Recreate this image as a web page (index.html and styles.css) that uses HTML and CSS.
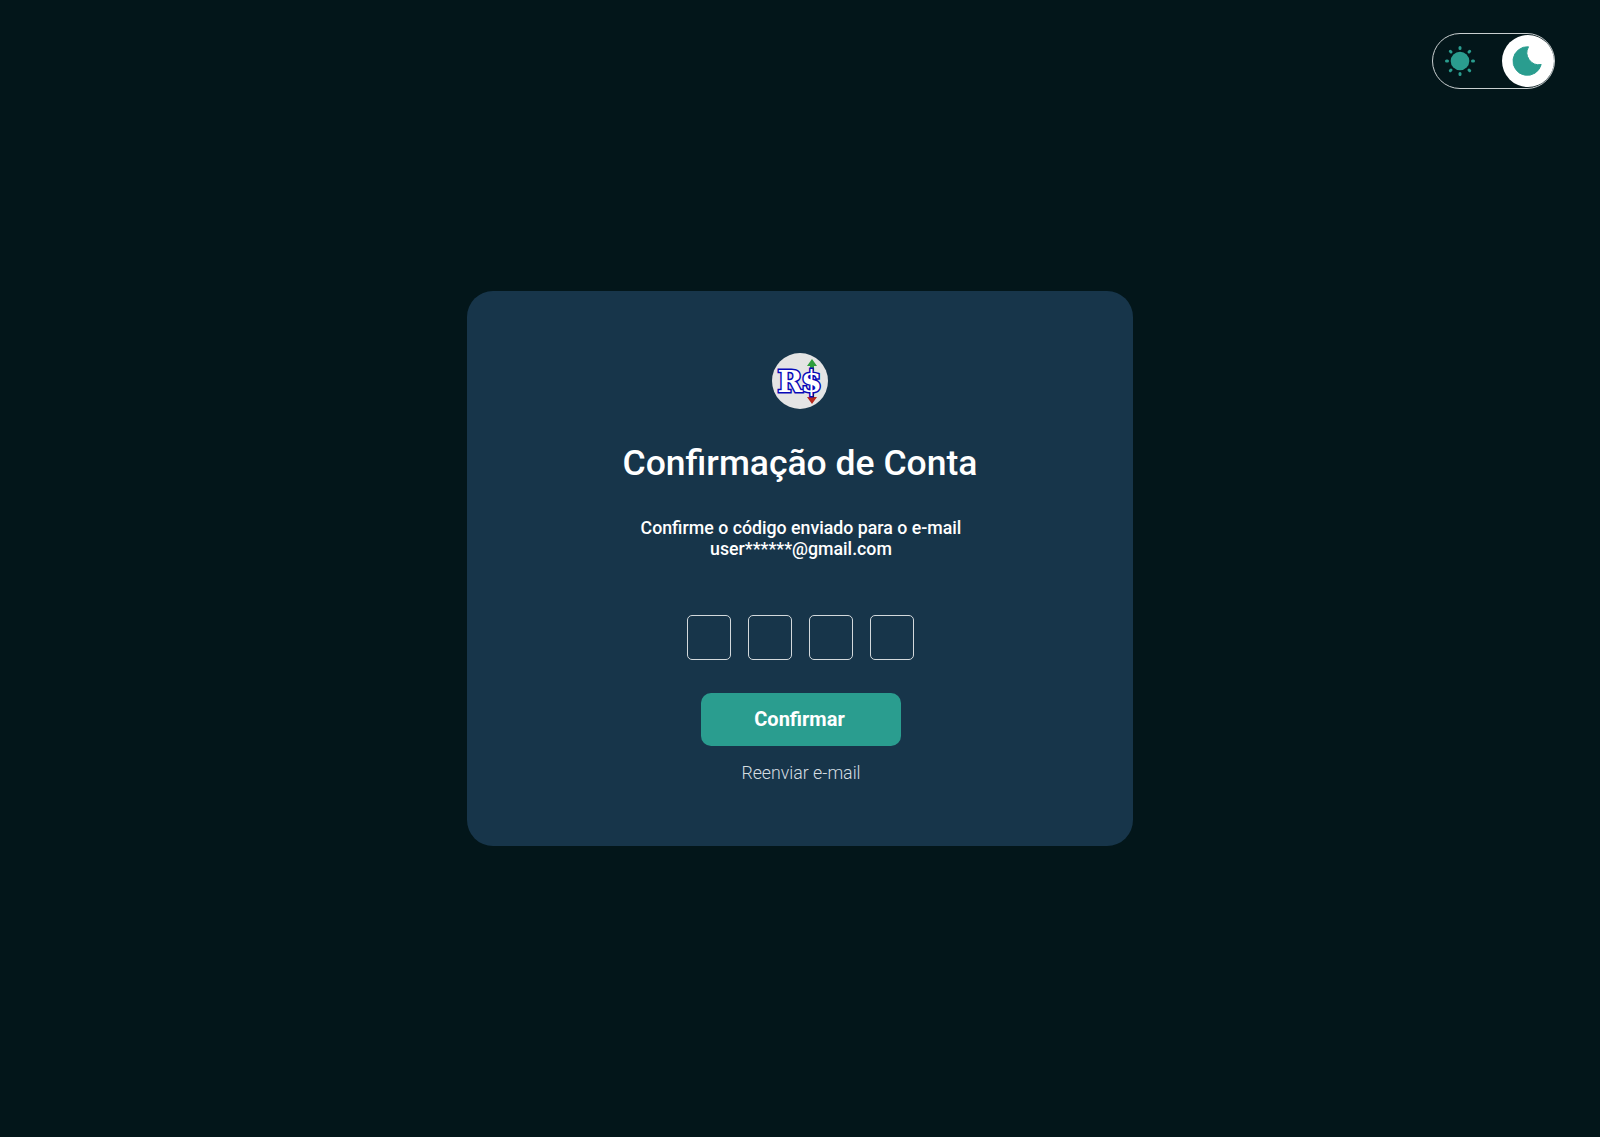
FILE: index.html
```html
<!DOCTYPE html>
<html lang="pt-BR">
<head>
<meta charset="utf-8">
<title>Confirmação de Conta</title>
<link rel="stylesheet" href="styles.css">
</head>
<body>
<div class="theme-toggle">
  <svg class="sun" viewBox="0 0 32 32" width="32" height="32">
    <circle cx="16" cy="16" r="9.300" fill="#2a9d8f"/>
    <path stroke="#2a9d8f" stroke-width="3" stroke-linecap="round" d="M16 2.500v1M16 28.500v1M2.500 16h1M28.500 16h1M6.300 6.300l.7.700M25 25l.7.700M6.300 25.700l.7-.7M25 7l.7-.7"/>
  </svg>
  <div class="knob">
    <svg viewBox="0 0 30 30" width="30" height="30">
      <path fill="#2a9d8f" stroke="#2a9d8f" stroke-width="1" stroke-linejoin="round" d="M16.500 .8A14.300 14.300 0 1 0 29.200 18.500A12 12 0 0 1 16.500 .8z"/>
    </svg>
  </div>
</div>
<main class="card">
  <svg class="logo" viewBox="0 0 56 56" width="56" height="56">
    <circle cx="28" cy="28" r="28" fill="#e4e4e4"/>
    <path fill="#2e9e3e" d="M40 6l5 7h-3v5h-4v-5h-3z"/>
    <path fill="#b8281c" d="M40 51l-5-7h3v-4h4v4h3z"/>
    <text class="logo-text" x="27" y="39" text-anchor="middle">R$</text>
  </svg>
  <h1 class="title">Confirmação de Conta</h1>
  <p class="subtitle">Confirme o código enviado para o e-mail<br>user******@gmail.com</p>
  <div class="code-row">
    <input class="code-box" type="text" maxlength="1">
    <input class="code-box" type="text" maxlength="1">
    <input class="code-box" type="text" maxlength="1">
    <input class="code-box" type="text" maxlength="1">
  </div>
  <button class="confirm" type="button">Confirmar</button>
  <a class="resend" href="#">Reenviar e-mail</a>
</main>
</body>
</html>
```
FILE: styles.css
```css
* { box-sizing: border-box; }
html, body { height: 100%; }
body {
  margin: 0;
  background: #03161a;
  font-family: Roboto, sans-serif;
  color: #fff;
  display: flex;
  align-items: center;
  justify-content: center;
}
.theme-toggle {
  position: absolute;
  top: 33px;
  left: 1432px;
  width: 123px;
  height: 56px;
  border: 1px solid #c9cfd0;
  border-radius: 28px;
  display: flex;
  align-items: center;
  justify-content: space-between;
  padding: 0 0 0 10.5px;
}
.sun { display: block; }
.knob {
  width: 52px;
  height: 52px;
  border-radius: 50%;
  background: #fff;
  display: flex;
  align-items: center;
  justify-content: center;
  padding-right: 2px;
}
.knob svg { display: block; }
.card {
  width: 666px;
  height: 555px;
  background: #17354a;
  border-radius: 26px;
  display: flex;
  flex-direction: column;
  align-items: center;
  padding-top: 62px;
}
.logo { display: block; }
.logo-text {
  font-family: "DejaVu Serif", serif;
  font-weight: 700;
  font-size: 30px;
  letter-spacing: -1.5px;
  fill: #fff;
  stroke: #0808b8;
  stroke-width: 3px;
  paint-order: stroke;
}
.title {
  margin: 33px 0 0;
  font-size: 35.5px;
  font-weight: 500;
  line-height: 42px;
  text-align: center;
}
.subtitle {
  margin: 34px 0 0;
  padding-left: 2px;
  font-size: 17.75px;
  font-weight: 500;
  line-height: 21px;
  text-align: center;
}
.code-row {
  display: flex;
  gap: 17px;
  margin: 55px 0 0 1px;
}
.code-box {
  width: 44px;
  height: 45px;
  padding: 0;
  background: transparent;
  border: 1px solid #d3d9dc;
  border-radius: 5px;
  outline: none;
  color: #fff;
}
.confirm {
  width: 200px;
  height: 53px;
  margin: 33px 0 0 2px;
  padding: 0 3px 2px 0;
  background: #2a9d8f;
  border: none;
  border-radius: 10px;
  color: #fff;
  font-family: Roboto, sans-serif;
  font-size: 20px;
  font-weight: 700;
}
.resend {
  margin: 17px 0 0 2px;
  color: #d5dde1;
  font-size: 17.75px;
  font-weight: 300;
  line-height: 21px;
  text-decoration: none;
}
```
